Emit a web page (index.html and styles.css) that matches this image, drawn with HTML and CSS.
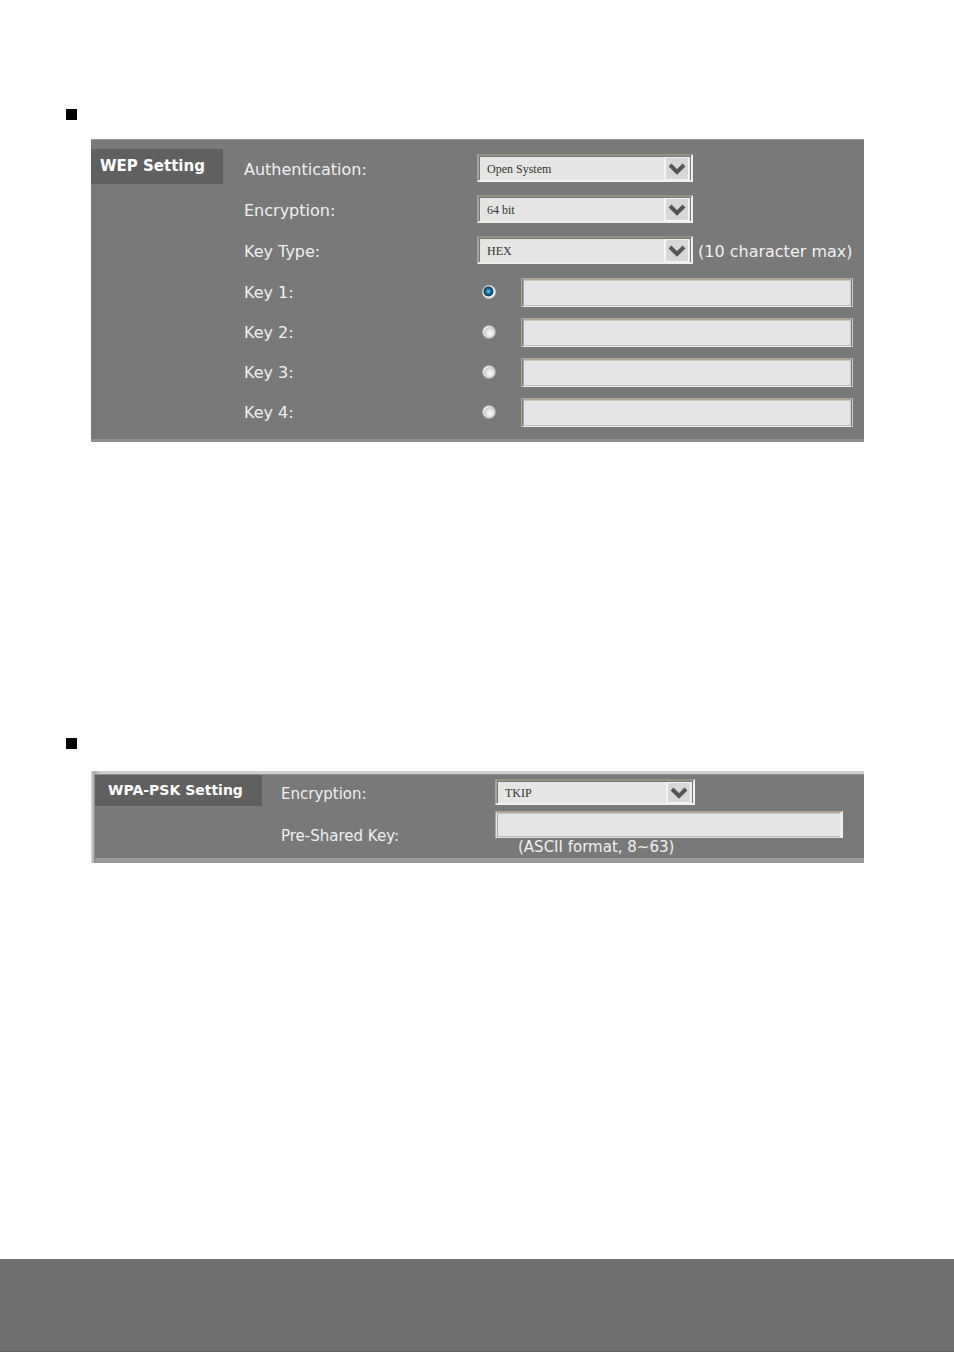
FILE: index.html
```html
<!DOCTYPE html>
<html lang="en">
<head>
  <meta charset="UTF-8">
  <meta name="viewport" content="width=device-width, initial-scale=1.0">
  <title>Wireless Security</title>
  <link rel="stylesheet" href="styles.css">
</head>
<body>
  <main>
    <div class="bullet"></div>
    <form class="panel wep">
      <h2 class="tab">WEP Setting</h2>
      <div class="rows">
        <div class="row">
          <label for="auth">Authentication:</label>
          <div class="select">
            <select id="auth"><option>Open System</option><option>Shared Key</option></select>
            <span class="arrow"><svg viewBox="0 0 20 20"><path d="M3 6l7 7 7-7"/></svg></span>
          </div>
        </div>
        <div class="row">
          <label for="enc">Encryption:</label>
          <div class="select">
            <select id="enc"><option>64 bit</option><option>128 bit</option></select>
            <span class="arrow"><svg viewBox="0 0 20 20"><path d="M3 6l7 7 7-7"/></svg></span>
          </div>
        </div>
        <div class="row">
          <label for="keytype">Key Type:</label>
          <div class="select">
            <select id="keytype"><option>HEX</option><option>ASCII</option></select>
            <span class="arrow"><svg viewBox="0 0 20 20"><path d="M3 6l7 7 7-7"/></svg></span>
          </div>
          <span class="note">(10 character max)</span>
        </div>
        <div class="row key">
          <label for="key1">Key 1:</label>
          <input type="radio" name="key" aria-label="Use key 1" checked>
          <input type="text" class="text" id="key1">
        </div>
        <div class="row key">
          <label for="key2">Key 2:</label>
          <input type="radio" name="key" aria-label="Use key 2">
          <input type="text" class="text" id="key2">
        </div>
        <div class="row key">
          <label for="key3">Key 3:</label>
          <input type="radio" name="key" aria-label="Use key 3">
          <input type="text" class="text" id="key3">
        </div>
        <div class="row key">
          <label for="key4">Key 4:</label>
          <input type="radio" name="key" aria-label="Use key 4">
          <input type="text" class="text" id="key4">
        </div>
      </div>
    </form>

    <div class="bullet"></div>
    <div class="frame">
      <form class="panel psk">
        <h2 class="tab">WPA-PSK Setting</h2>
        <div class="rows">
          <div class="row">
            <label for="cipher">Encryption:</label>
            <div class="select">
              <select id="cipher"><option>TKIP</option><option>AES</option></select>
              <span class="arrow"><svg viewBox="0 0 20 20"><path d="M3 6l7 7 7-7"/></svg></span>
            </div>
          </div>
          <div class="row">
            <label for="psk">Pre-Shared Key:</label>
            <div class="field">
              <input type="text" class="text" id="psk">
              <span class="hint">(ASCII format, 8~63)</span>
            </div>
          </div>
        </div>
      </form>
    </div>
  </main>
  <footer></footer>
</body>
</html>
```

FILE: styles.css
```css
* {
  box-sizing: border-box;
}

body {
  margin: 0;
  min-height: 100vh;
  display: flex;
  flex-direction: column;
  background: #fff;
  color: #f0f0f0;
  font-family: Verdana, "DejaVu Sans", sans-serif;
  font-size: 16px;
}

main {
  flex: 1;
  padding: 109px 90px 0 66px;
}

footer {
  height: 93px;
  background: #707070;
  border-bottom: 1px solid #606060;
}

.bullet {
  width: 11px;
  height: 11px;
  background: #000;
}

.panel {
  display: flex;
  align-items: flex-start;
  background: #797979;
}

.tab {
  margin: 0;
  flex: none;
  background: #606060;
  color: #fff;
  font-weight: bold;
}

.rows {
  flex: 1;
}

.row {
  display: flex;
  align-items: center;
}

.row label {
  flex: none;
}

/* WEP */
.wep {
  margin: 19px 0 296px 25px;
  padding: 9px 11px 7px 0;
  border-top: 1px solid #999;
  border-bottom: 3px solid #8e8e8e;
}

.wep .tab {
  width: 132px;
  margin-right: 21px;
  padding-left: 9px;
  font-size: 15px;
  line-height: 35px;
}

.wep .row {
  height: 41px;
}

.wep .key {
  height: 40px;
}

.wep label {
  width: 233px;
}

.wep .select {
  width: 216px;
  height: 28px;
  margin-bottom: 3px;
}

.note {
  margin-left: 5px;
}

/* WPA-PSK */
.frame {
  margin: 22px 0 0 25px;
  padding: 3px 0 0 3px;
  background: linear-gradient(to right, #ddd, #aaa 3px, #cfcfcf 10px);
}

.psk {
  min-height: 89px;
  border-top: 1px solid #909090;
  border-left: 1px solid #909090;
  border-bottom: 5px solid #999;
  font-size: 15px;
}

.psk .tab {
  width: 167px;
  margin-right: 19px;
  padding-left: 13px;
  font-size: 14px;
  line-height: 31px;
}

.psk .rows {
  padding: 4px 21px 0 0;
}

.psk .row + .row {
  padding-top: 6px;
}

.psk label {
  width: 214px;
  padding-top: 3px;
}

.psk .select {
  width: 200px;
  height: 26px;
}

.psk .text {
  height: 27px;
}

.field {
  flex: 1;
  display: flex;
  flex-direction: column;
}

.hint {
  padding-left: 23px;
  line-height: 19px;
}

/* controls */
.select {
  display: grid;
  grid-template-columns: 1fr 27px;
  grid-template-rows: minmax(0, 1fr);
  border: 2px solid #f0f0ec;
  border-top-color: #929285;
  border-left-color: #a5a598;
  background: #e5e5e3;
}

.select select {
  grid-area: 1 / 1 / 2 / 3;
  appearance: none;
  width: 100%;
  height: 100%;
  margin: 0;
  padding: 0 30px 0 7px;
  border: 1px solid #777;
  border-bottom: 0;
  border-radius: 0;
  background: transparent;
  color: #333;
  font-family: "Liberation Serif", serif;
  font-size: 12px;
}

.arrow {
  grid-area: 1 / 2 / 2 / 3;
  min-height: 0;
  margin: 1px 2px 0 0;
  border: 1px solid #f4f4f4;
  border-left-width: 2px;
  background: #d8d8d8;
  display: flex;
  align-items: center;
  justify-content: center;
  pointer-events: none;
}

.arrow svg {
  width: 20px;
  height: 20px;
  flex: none;
  fill: none;
  stroke: #555;
  stroke-width: 4;
}

.text {
  flex: 1;
  min-width: 0;
  height: 29px;
  padding: 0 6px;
  border: 3px double #f0f0f0;
  border-top: 2px solid #aaa797;
  border-left: 3px double #aaa9a0;
  border-bottom: 1px solid #eee;
  border-radius: 0;
  background: #e5e5e5;
  box-shadow: inset 0 -1px #bbb, inset 0 1px #c8c8be;
  font-size: 14px;
}

.key .text {
  border-right: 3px double #ccc;
  background-clip: padding-box;
}

.psk .text {
  flex: none;
  border-right: 3px solid #eee;
  border-bottom: 1px solid #ddd;
}

input[type="radio"] {
  appearance: none;
  width: 14px;
  height: 14px;
  margin: 0 25px 0 5px;
  border: 1px solid #aaa;
  border-radius: 50%;
  background: radial-gradient(circle at 60% 60%, #f2f2f2 20%, #c9ccd0 55%, #eee 65%);
}

input[type="radio"]:checked {
  border-color: #ccc;
  background: radial-gradient(circle at 45% 45%, #7fd0ee 0, #2588b8 20%, #0c3658 48%, #eee 58%);
}
```
